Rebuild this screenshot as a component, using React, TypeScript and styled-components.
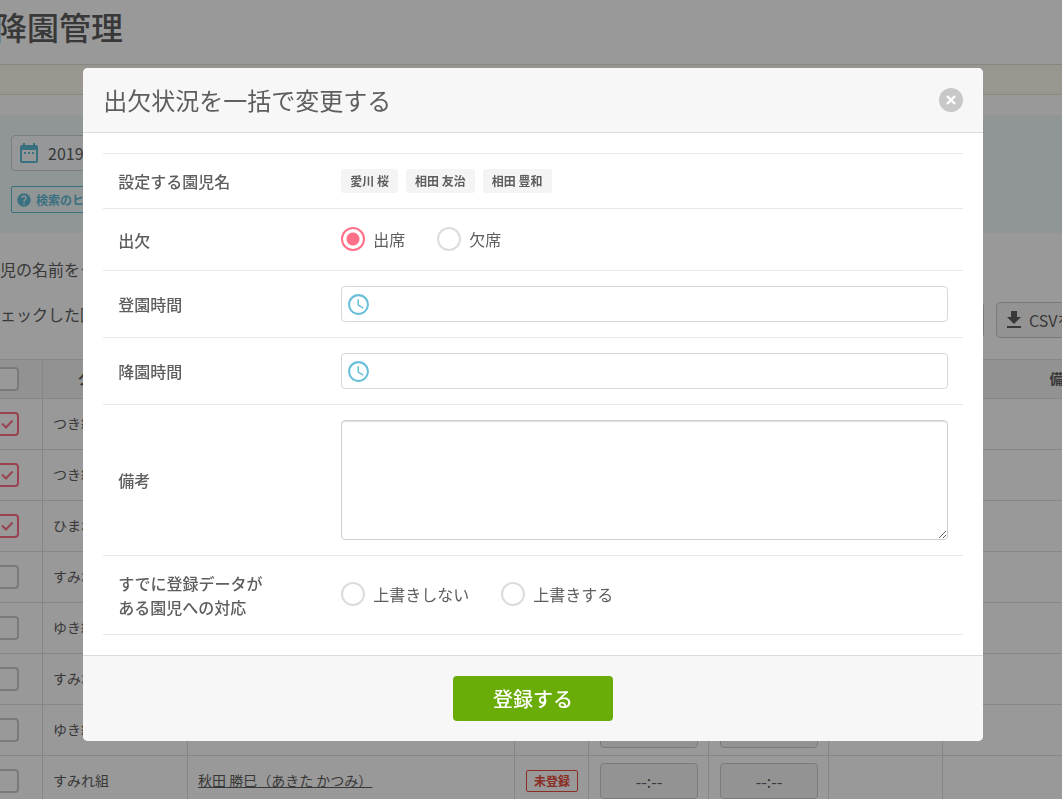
import React, { useState } from "react";
import styled, { createGlobalStyle } from "styled-components";
import { MdAccessTime, MdDateRange, MdFileDownload, MdHelp } from "react-icons/md";

const GlobalStyle = createGlobalStyle`
  *, *::before, *::after { box-sizing: border-box; }
  body {
    margin: 0;
    overflow: hidden;
    background: #fff;
    color: #5e5e5e;
    font-family: "Noto Sans CJK JP", sans-serif;
    font-size: 16px;
    line-height: 24px;
  }
  button, input, textarea { font: inherit; color: inherit; }
`;

/* ---------- page behind the dialog ---------- */

const Viewport = styled.div`
  height: 100vh;
  overflow: hidden;
`;

const Page = styled.main`
  min-width: 1205px;
  margin-left: -20px;
`;

const PageHeader = styled.header`
  height: 65px;
  padding: 2px 15px;
  border-bottom: 1px solid #e0e0e0;
`;

const PageTitle = styled.h1`
  margin: 0;
  font-size: 32px;
  line-height: 48px;
  font-weight: 500;
`;

const Notice = styled.div`
  height: 30px;
  margin-bottom: 20px;
  background: #fff9ee;
  border-bottom: 1px solid #e8e1d8;
`;

const SearchPanel = styled.section`
  display: flex;
  flex-direction: column;
  align-items: flex-start;
  gap: 15px;
  height: 118px;
  padding: 20px 31px;
  background: #f1f9fa;
`;

const DateField = styled.label`
  display: flex;
  align-items: center;
  gap: 7px;
  width: 180px;
  height: 36px;
  padding: 0 5px;
  border: 1px solid #d0d0d0;
  border-radius: 4px;
  background: #f8fcfd;
  svg { flex: none; color: #62bdd6; }
  input { width: 100%; border: 0; padding: 0; background: none; outline: 0; }
`;

const HintButton = styled.button`
  display: flex;
  align-items: center;
  gap: 4px;
  height: 27px;
  padding: 0 8px 0 4px;
  border: 1px solid #62bdd6;
  border-radius: 2px;
  background: none;
  color: #62bdd6;
  font-size: 12px;
  font-weight: 700;
`;

const Guide = styled.p`
  margin: 24px 20px 21px;
`;

const Toolbar = styled.div`
  display: flex;
  align-items: center;
  gap: 12px;
  height: 36px;
  margin-bottom: 21px;
  padding-left: 20px;
`;

const ToolbarText = styled.span`
  flex: 1;
  padding-bottom: 12px;
`;

const ToolButton = styled.button<{ $width: number }>`
  display: flex;
  align-items: center;
  gap: 3px;
  width: ${(p) => p.$width}px;
  height: 36px;
  padding: 0 5px;
  border: 1px solid #ccc;
  border-radius: 4px;
  background: #f6f6f6;
  white-space: nowrap;
`;

const ListTable = styled.table`
  width: 100%;
  table-layout: fixed;
  border-collapse: collapse;
  font-size: 14px;
  th, td {
    height: 51px;
    padding: 0 11px;
    border: 1px solid #e0e0e0;
    text-align: left;
  }
  td:nth-child(2), td:nth-child(3) { padding: 0 10px 2px; }
  th {
    height: 39px;
    padding-bottom: 2px;
    background: #f3f3f3;
    text-align: center;
    font-weight: 700;
    white-space: nowrap;
  }
  th:first-child, td:first-child { padding: 0 14px; text-align: left; }
`;

const TickWrap = styled.label`
  display: grid;
  width: 24px;
  height: 24px;
  > * { grid-area: 1 / 1; }
  svg { pointer-events: none; }
`;

const TickBox = styled.input`
  appearance: none;
  display: block;
  width: 24px;
  height: 24px;
  margin: 0;
  border: 2px solid #ccc;
  border-radius: 4px;
  background: #fff;
  &:checked { border-color: #ff7088; }
`;

const NameLink = styled.a`
  color: inherit;
  text-decoration: underline;
`;

const Status = styled.span`
  display: block;
  width: 52px;
  height: 22px;
  border: 1px solid #e74c3c;
  border-radius: 2px;
  color: #e74c3c;
  font-size: 12px;
  line-height: 20px;
  font-weight: 700;
  text-align: center;
`;

const TimeBox = styled.input`
  display: block;
  width: 98px;
  height: 36px;
  padding: 0;
  border: 1px solid #ccc;
  border-radius: 4px;
  background: #f6f6f6;
  font-size: 16px;
  text-align: center;
  outline: 0;
`;

/* ---------- dialog ---------- */

const Overlay = styled.div`
  position: fixed;
  inset: 0;
  z-index: 10;
  display: flex;
  justify-content: center;
  align-items: flex-start;
  padding: 68px 0 0 4px;
  background: rgba(0, 0, 0, 0.4);
`;

const Dialog = styled.div`
  width: 85%;
  max-width: 900px;
  overflow: hidden;
  border-radius: 5px;
  background: #fff;
`;

const DialogHeader = styled.header`
  display: flex;
  align-items: center;
  justify-content: space-between;
  height: 65px;
  padding: 0 20px;
  border-bottom: 1px solid #dcdcdc;
  background: #f7f7f7;
`;

const DialogTitle = styled.h2`
  margin: 0;
  font-size: 24px;
  line-height: 36px;
  font-weight: 400;
`;

const CloseButton = styled.button`
  display: grid;
  place-items: center;
  width: 24px;
  height: 24px;
  padding: 0;
  border: 0;
  border-radius: 50%;
  background: #c8c8c8;
`;

const DialogBody = styled.div`
  padding: 20px;
`;

const Rows = styled.div`
  border-top: 1px solid #e8e8e8;
`;

const FormRow = styled.div<{ $min?: number }>`
  display: grid;
  grid-template-columns: 208px 1fr;
  gap: 15px;
  align-items: center;
  min-height: ${(p) => p.$min ?? 55}px;
  padding: 15px;
  border-bottom: 1px solid #e8e8e8;
`;

const RowLabel = styled.label`
  font-size: 16px;
  font-weight: 500;
`;

const Tags = styled.div`
  display: flex;
  gap: 8px;
`;

const Tag = styled.span`
  padding: 0 9px;
  border-radius: 3px;
  background: #f4f4f4;
  font-size: 12px;
  font-weight: 700;
`;

const Choices = styled.div`
  display: flex;
  gap: 32px;
`;

const Choice = styled.label`
  display: flex;
  align-items: center;
  gap: 8px;
  padding-bottom: 2px;
`;

const Radio = styled.input`
  appearance: none;
  width: 24px;
  height: 24px;
  margin: 0;
  border: 2px solid #dcdcdc;
  border-radius: 50%;
  background: #fff;
  &:checked {
    border-color: #ff7088;
    background: radial-gradient(circle, #ff7088 6px, #fff 7px);
  }
`;

const TimeField = styled.div`
  display: flex;
  align-items: center;
  height: 36px;
  padding: 0 4px;
  border: 1px solid #d8d8d8;
  border-radius: 4px;
  svg { flex: none; color: #6bc0d9; }
  input { flex: 1; min-width: 0; border: 0; padding: 0 8px; background: none; outline: 0; }
`;

const Memo = styled.textarea`
  display: block;
  width: 100%;
  height: 120px;
  padding: 8px;
  border: 1px solid #d0d0d0;
  border-radius: 4px;
  box-shadow: inset 0 1px 1px #ddd;
  outline: 0;
`;

const DialogFooter = styled.footer`
  display: flex;
  justify-content: center;
  padding: 20px;
  border-top: 1px solid #dcdcdc;
  background: #f7f7f7;
`;

const SubmitButton = styled.button`
  width: 160px;
  height: 45px;
  padding: 0;
  border: 0;
  border-radius: 4px;
  background: #6aad08;
  color: #fff;
  font-size: 20px;
  font-weight: 500;
`;

const columns = [62, 145, 327, 74, 120, 120, 114];

const rows = [
  { group: "つき組", checked: true },
  { group: "つき組", checked: true },
  { group: "ひまわり組", checked: true },
  { group: "すみれ組" },
  { group: "ゆき組" },
  { group: "すみれ組" },
  { group: "ゆき組" },
  { group: "すみれ組", name: "秋田 勝巳（あきた かつみ）", status: "未登録" },
];

function Tick({ checked, label }: { checked?: boolean; label: string }) {
  const [on, setOn] = useState(!!checked);
  return (
    <TickWrap>
      <TickBox type="checkbox" aria-label={label} checked={on} onChange={() => setOn(!on)} />
      {on && (
        <svg width="24" height="24" viewBox="0 0 24 24" fill="none" stroke="#ff7088" strokeWidth="2">
          <path d="M7 11.5l4 4 6.5-7" />
        </svg>
      )}
    </TickWrap>
  );
}

export default function App() {
  const [attendance, setAttendance] = useState("出席");
  const [overwrite, setOverwrite] = useState("");

  return (
    <>
      <GlobalStyle />
      <Viewport>
        <Page>
          <PageHeader>
            <PageTitle>降園管理</PageTitle>
          </PageHeader>
          <Notice />
          <SearchPanel>
            <DateField>
              <MdDateRange size={24} />
              <input aria-label="date" defaultValue="2019" />
            </DateField>
            <HintButton>
              <MdHelp size={16} />
              検索のヒント
            </HintButton>
          </SearchPanel>
          <Guide>児の名前をク</Guide>
          <Toolbar>
            <ToolbarText>ェックした園</ToolbarText>
            <ToolButton $width={120} aria-label="print" />
            <ToolButton $width={189}>
              <MdFileDownload size={24} />
              CSVを出力
            </ToolButton>
          </Toolbar>
          <ListTable>
            <colgroup>
              {columns.map((w, i) => (
                <col key={i} style={{ width: w }} />
              ))}
              <col />
            </colgroup>
            <thead>
              <tr>
                <th><Tick label="all" /></th>
                <th>クラス/組名</th>
                <th />
                <th />
                <th />
                <th />
                <th />
                <th>備考</th>
              </tr>
            </thead>
            <tbody>
              {rows.map((r, i) => (
                <tr key={i}>
                  <td><Tick checked={r.checked} label={r.group} /></td>
                  <td>{r.group}</td>
                  <td>{r.name && <NameLink href="#">{r.name}</NameLink>}</td>
                  <td>{r.status && <Status>{r.status}</Status>}</td>
                  <td><TimeBox aria-label="in" defaultValue="--:--" /></td>
                  <td><TimeBox aria-label="out" defaultValue="--:--" /></td>
                  <td />
                  <td />
                </tr>
              ))}
            </tbody>
          </ListTable>
        </Page>
      </Viewport>

      <Overlay>
        <Dialog role="dialog" aria-modal="true" aria-labelledby="dialog-title">
          <DialogHeader>
            <DialogTitle id="dialog-title">出欠状況を一括で変更する</DialogTitle>
            <CloseButton aria-label="close">
              <svg width="10" height="10" viewBox="0 0 10 10" stroke="#fff" strokeWidth="2.4">
                <path d="M1 1l8 8M9 1L1 9" />
              </svg>
            </CloseButton>
          </DialogHeader>
          <DialogBody>
            <Rows>
              <FormRow>
                <RowLabel as="span">設定する園児名</RowLabel>
                <Tags>
                  <Tag>愛川 桜</Tag>
                  <Tag>相田 友治</Tag>
                  <Tag>相田 豊和</Tag>
                </Tags>
              </FormRow>
              <FormRow $min={62} role="radiogroup" aria-labelledby="attendance-label">
                <RowLabel as="span" id="attendance-label">出欠</RowLabel>
                <Choices>
                  {["出席", "欠席"].map((v) => (
                    <Choice key={v}>
                      <Radio type="radio" name="attendance" checked={attendance === v} onChange={() => setAttendance(v)} />
                      {v}
                    </Choice>
                  ))}
                </Choices>
              </FormRow>
              <FormRow>
                <RowLabel htmlFor="arrive">登園時間</RowLabel>
                <TimeField>
                  <MdAccessTime size={25} />
                  <input id="arrive" type="text" />
                </TimeField>
              </FormRow>
              <FormRow>
                <RowLabel htmlFor="leave">降園時間</RowLabel>
                <TimeField>
                  <MdAccessTime size={25} />
                  <input id="leave" type="text" />
                </TimeField>
              </FormRow>
              <FormRow>
                <RowLabel htmlFor="memo">備考</RowLabel>
                <Memo id="memo" />
              </FormRow>
              <FormRow role="radiogroup" aria-labelledby="overwrite-label">
                <RowLabel as="span" id="overwrite-label">
                  すでに登録データが
                  <br />
                  ある園児への対応
                </RowLabel>
                <Choices>
                  {["上書きしない", "上書きする"].map((v) => (
                    <Choice key={v}>
                      <Radio type="radio" name="overwrite" checked={overwrite === v} onChange={() => setOverwrite(v)} />
                      {v}
                    </Choice>
                  ))}
                </Choices>
              </FormRow>
            </Rows>
          </DialogBody>
          <DialogFooter>
            <SubmitButton>登録する</SubmitButton>
          </DialogFooter>
        </Dialog>
      </Overlay>
    </>
  );
}
